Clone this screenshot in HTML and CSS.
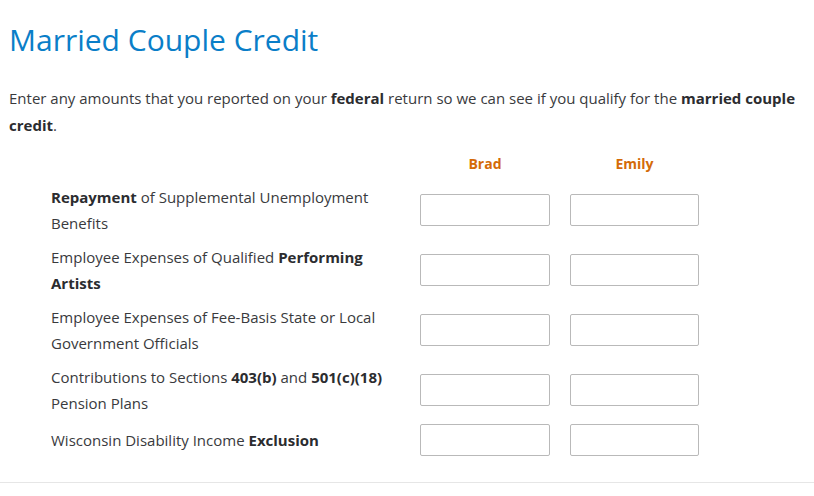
FILE: index.html
```html
<!DOCTYPE html>
<html>
<head>
<meta charset="utf-8">
<link rel="stylesheet" href="styles.css">
</head>
<body>
<div class="page">
  <h1 class="title">Married Couple Credit</h1>
  <p class="intro">Enter any amounts that you reported on your <b>federal</b> return so we can see if you qualify for the <b>married couple credit</b>.</p>
  <div class="grid">
    <div class="head-spacer"></div>
    <div class="head">Brad</div>
    <div class="head">Emily</div>

    <div class="label"><b>Repayment</b> of Supplemental Unemployment Benefits</div>
    <input class="field" type="text">
    <input class="field" type="text">

    <div class="label">Employee Expenses of Qualified <b>Performing Artists</b></div>
    <input class="field" type="text">
    <input class="field" type="text">

    <div class="label">Employee Expenses of Fee-Basis State or Local Government Officials</div>
    <input class="field" type="text">
    <input class="field" type="text">

    <div class="label">Contributions to Sections <b>403(b)</b> and <b>501(c)(18)</b> Pension Plans</div>
    <input class="field" type="text">
    <input class="field" type="text">

    <div class="label">Wisconsin Disability Income <b>Exclusion</b></div>
    <input class="field" type="text">
    <input class="field" type="text">
  </div>
</div>
<hr class="rule">
</body>
</html>
```
FILE: styles.css
```css
html, body {
  margin: 0;
  padding: 0;
  background: #ffffff;
  font-family: "Open Sans", Lato, sans-serif;
  color: #393a3d;
}
.page {
  padding: 22px 0 0 9px;
}
.title {
  margin: 0;
  font-size: 30px;
  line-height: 36px;
  font-weight: 400;
  color: #0a7ec8;
}
.intro {
  margin: 27px 0 0 0;
  font-size: 15px;
  line-height: 27px;
  width: 800px;
}
.intro b, .label b {
  font-weight: 700;
  color: #2b2c2f;
}
.grid {
  display: grid;
  grid-template-columns: 349px 130px 129px;
  column-gap: 20px;
  row-gap: 8px;
  margin: 15px 0 0 42px;
  align-items: center;
}
.head {
  font-size: 14px;
  font-weight: 700;
  line-height: 20px;
  color: #d46b08;
  text-align: center;
  margin-bottom: 2px;
}
.label {
  font-size: 15px;
  line-height: 26px;
}
.field {
  box-sizing: border-box;
  height: 32px;
  width: 100%;
  margin: 0;
  border: 1px solid #b9b9b9;
  border-radius: 2px;
  background: #fff;
  padding: 0 8px;
  font: inherit;
}
.rule {
  margin: 26px 0 0 0;
  border: 0;
  border-top: 1px solid #e6e6e6;
  height: 0;
}
```
